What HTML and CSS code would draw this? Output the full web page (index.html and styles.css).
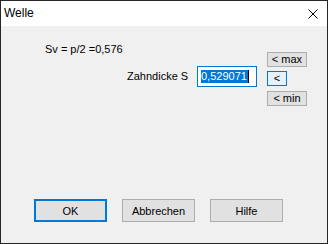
FILE: index.html
```html
<!DOCTYPE html>
<html lang="de">
<head>
    <meta charset="UTF-8">
    <title>Welle</title>
    <link rel="stylesheet" href="styles.css">
</head>
<body>
    <div class="dialog">
        <div class="titlebar">
            <span class="title">Welle</span>
            <svg class="close" width="10" height="10" viewBox="0 0 10 10">
                <path d="M0.5 0.5 L9.5 9.5 M9.5 0.5 L0.5 9.5" stroke="#000" stroke-width="1" fill="none"/>
            </svg>
        </div>

        <div class="content">
            <div class="main">
                <div class="left-col">
                    <div class="sv">Sv = p/2 =0,576</div>
                    <div class="field-row">
                        <label class="field-label">Zahndicke S</label>
                        <div class="input">
                            <span class="selected">0,529071</span><span class="caret"></span>
                        </div>
                    </div>
                </div>
                <div class="right-col">
                    <button class="small-btn">&lt; max</button>
                    <button class="small-btn narrow focus">&lt;</button>
                    <button class="small-btn min">&lt; min</button>
                </div>
            </div>

            <div class="footer">
                <button class="btn default">OK</button>
                <button class="btn">Abbrechen</button>
                <button class="btn">Hilfe</button>
            </div>
        </div>
    </div>
</body>
</html>
```

FILE: styles.css
```css
body {
    margin: 0;
    font-family: "Liberation Sans", Arial, sans-serif;
    font-size: 11px;
    color: #000;
}

.dialog {
    width: 328px;
    height: 244px;
    box-sizing: border-box;
    border: 1px solid #262626;
    display: flex;
    flex-direction: column;
}

.titlebar {
    height: 25px;
    background-color: #fff;
    display: flex;
    align-items: center;
    padding-left: 3px;
}

.title {
    font-size: 12px;
    line-height: 14px;
    margin-top: -1px;
}

.close {
    margin-left: auto;
    margin-right: 9px;
    margin-top: 1px;
}

.content {
    flex: 1;
    background-color: #f0f0f0;
    display: flex;
    flex-direction: column;
}

.main {
    display: flex;
    padding: 17px 20px 0 44px;
}

.left-col {
    flex: 1;
}

.sv {
    line-height: 13px;
}

.field-row {
    display: flex;
    align-items: center;
    margin-top: 10px;
    margin-left: 82px;
}

.field-label {
    width: 70px;
    line-height: 13px;
}

.input {
    width: 60px;
    height: 21px;
    box-sizing: border-box;
    border: 1px solid #0078d7;
    background-color: #fff;
    display: flex;
    align-items: center;
    padding-left: 3px;
}

.selected {
    background-color: #0078d7;
    color: #fff;
    line-height: 13px;
    padding-right: 1px;
}

.caret {
    width: 1px;
    height: 13px;
    background-color: #000;
}

.right-col {
    width: 40px;
    display: flex;
    flex-direction: column;
    gap: 4px;
    margin-top: 9px;
}

.small-btn, .btn {
    font-family: "Liberation Sans", Arial, sans-serif;
    font-size: 11px;
    color: #000;
    background-color: #e1e1e1;
    border: 1px solid #adadad;
    padding: 0;
    margin: 0;
    box-sizing: border-box;
}

.small-btn {
    height: 15px;
    width: 40px;
    line-height: 13px;
}

.small-btn.narrow {
    width: 20px;
}

.small-btn.focus {
    border-color: #0078d7;
    background-color: #e5f1fb;
}

.small-btn.min {
    margin-top: 1px;
}

.footer {
    margin-top: auto;
    display: flex;
    gap: 15px;
    padding: 0 0 21px 33px;
}

.btn {
    width: 73px;
    height: 23px;
}

.btn.default {
    border: 2px solid #0078d7;
}
```
